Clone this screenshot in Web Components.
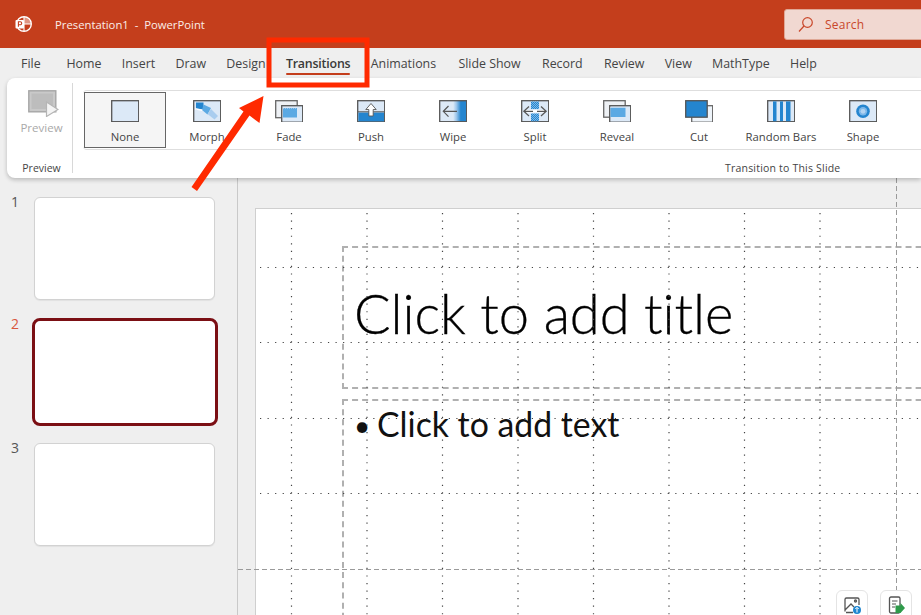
<!DOCTYPE html>
<html><head><meta charset="utf-8"><style>
html,body{margin:0;height:100%;overflow:hidden}
body{font-family:"Open Sans","Noto Sans",sans-serif;background:#efefef}
</style></head><body>
<ppt-app>
  <ppt-titlebar slot="title" doc="Presentation1  -  PowerPoint"></ppt-titlebar>
  <ppt-tabs slot="tabs">
    <ppt-tab>File</ppt-tab><ppt-tab>Home</ppt-tab><ppt-tab>Insert</ppt-tab><ppt-tab>Draw</ppt-tab><ppt-tab>Design</ppt-tab><ppt-tab active>Transitions</ppt-tab><ppt-tab style="margin-right:2px">Animations</ppt-tab><ppt-tab style="margin-right:1px">Slide Show</ppt-tab><ppt-tab style="margin-right:1px">Record</ppt-tab><ppt-tab>Review</ppt-tab><ppt-tab>View</ppt-tab><ppt-tab>MathType</ppt-tab><ppt-tab>Help</ppt-tab>
  </ppt-tabs>
  <ppt-ribbon slot="ribbon">
    <ppt-group slot="preview" label="Preview"><ppt-preview></ppt-preview></ppt-group>
    <ppt-gallery slot="gallery">
      <ppt-transition kind="none" selected>None</ppt-transition>
      <ppt-transition kind="morph">Morph</ppt-transition>
      <ppt-transition kind="fade">Fade</ppt-transition>
      <ppt-transition kind="push">Push</ppt-transition>
      <ppt-transition kind="wipe">Wipe</ppt-transition>
      <ppt-transition kind="split">Split</ppt-transition>
      <ppt-transition kind="reveal">Reveal</ppt-transition>
      <ppt-transition kind="cut">Cut</ppt-transition>
      <ppt-transition kind="bars">Random Bars</ppt-transition>
      <ppt-transition kind="shape">Shape</ppt-transition>
    </ppt-gallery>
  </ppt-ribbon>
  <ppt-thumbs slot="thumbs">
    <ppt-thumb n="1"></ppt-thumb>
    <ppt-thumb n="2" selected></ppt-thumb>
    <ppt-thumb n="3"></ppt-thumb>
  </ppt-thumbs>
  <ppt-stage slot="stage"></ppt-stage>
  <ppt-callout slot="callout"></ppt-callout>
</ppt-app>
<script>
const def=(name,html,extra)=>{
  customElements.define(name,class extends HTMLElement{
    constructor(){super();this.attachShadow({mode:'open'}).innerHTML=typeof html==='function'?html(this):html;}
    connectedCallback(){if(extra)extra(this);}
  });
};

def('ppt-app',`<style>
:host{display:grid;width:921px;height:615px;grid-template-columns:238px 683px;grid-template-rows:48px 30px 100px 437px;position:relative;overflow:hidden;background:#efefef}
.top{grid-column:1/3}
.left{border-right:1px solid #c9c9c9;min-height:0}
.main{min-width:0;min-height:0;overflow:hidden}
</style>
<div class="top"><slot name="title"></slot></div>
<div class="top"><slot name="tabs"></slot></div>
<div class="top"><slot name="ribbon"></slot></div>
<div class="left"><slot name="thumbs"></slot></div>
<div class="main"><slot name="stage"></slot></div>
<slot name="callout"></slot>`);

def('ppt-titlebar',`<style>
:host{display:flex;align-items:center;height:48px;background:#c43e1c;color:#fbeee9;font-size:11.300px;box-sizing:border-box;padding-left:14px}
svg.logo{width:18px;height:18px;flex:none;margin-right:23px}
.doc{white-space:pre;flex:1}
.search{flex:none;width:150px;height:31px;box-sizing:border-box;margin-right:-13px;background:#f1d8d1;border:1px solid #dfa795;border-radius:3px;display:flex;align-items:center;gap:11px;padding-left:12px;color:#c9472a;font-size:12px;letter-spacing:.02em}
.search svg{width:17px;height:17px}
</style>
<svg class="logo" viewBox="0 0 18 18"><circle cx="10" cy="9" r="7.300" fill="none" stroke="#fff" stroke-width="1.400"/><path d="M10 2v14M10 9h7" stroke="#fff" stroke-width="1.100"/><path d="M10 2.200a6.800 6.800 0 0 1 6.800 6.800H10z" fill="#fff" opacity=".45"/><rect x="1.500" y="5" width="8.500" height="8.500" rx="1" fill="#fff"/><path d="M4.400 11.800V6.800h1.800a1.500 1.500 0 0 1 0 3H4.400" fill="none" stroke="#c43e1c" stroke-width="1.100"/></svg>
<span class="doc"></span>
<div class="search"><svg viewBox="0 0 17 17" fill="none" stroke="#c9472a" stroke-width="1.200"><circle cx="10.500" cy="6.500" r="4.800"/><path d="M7 10 2 15.500"/></svg><span>Search</span></div>`,
el=>{el.shadowRoot.querySelector('.doc').textContent=el.getAttribute('doc');});

def('ppt-tabs',`<style>:host{display:flex;align-items:stretch;gap:20.300px;height:30px;background:#efefef;padding-left:21px}
::slotted(:first-child){margin-right:5.500px}</style><slot></slot>`);
def('ppt-tab',`<style>
:host{display:flex;flex:none;justify-content:center;align-items:center;height:30px;box-sizing:border-box;font-size:12.400px;color:#444;position:relative;padding-top:1px;white-space:nowrap}
:host([active]){font-weight:600;color:#3a3a3a;letter-spacing:-.2px}
:host([active])::after{content:"";position:absolute;left:0;right:0;bottom:3.500px;height:2px;background:#c43e1c;border-radius:1px}
</style><slot></slot>`);

def('ppt-ribbon',`<style>
:host{display:block;margin-left:7px;height:100px;background:#fff;border-radius:8px 0 0 8px;box-shadow:0 2px 4px rgba(0,0,0,.22);position:relative;z-index:2}
.row{display:flex;height:100%}
.pv{flex:none;width:66px;padding:5px 0 5px;box-sizing:border-box}
.tr{flex:1;min-width:0;display:grid;grid-template-rows:60px 1fr;padding:12px 0 0 10px;box-sizing:border-box;height:100%}
.gl{font-size:10.500px;color:#444;white-space:nowrap;padding:11px 0 0 642px;letter-spacing:.2px}
</style><div class="row"><div class="pv"><slot name="preview"></slot></div><div class="tr"><slot name="gallery"></slot><div class="gl">Transition to This Slide</div></div></div>`);

def('ppt-group',el=>`<style>
:host{display:flex;flex-direction:column;box-sizing:border-box;height:100%;border-right:1px solid #d8d8d8;padding-left:4px}
.b{flex:1}
.l{font-size:10.500px;color:#444;text-align:center;height:10px;line-height:10px}
</style><div class="b"><slot></slot></div><div class="l">${el.getAttribute('label')}</div>`);

def('ppt-preview',`<style>
:host{display:flex;flex-direction:column;align-items:center;padding-top:7px;color:#a9a9a9;font-size:11.500px}
svg{width:31px;height:27px;display:block;margin-left:3px}
</style><svg viewBox="0 0 31 27"><rect x=".8" y=".8" width="27" height="21" fill="#c9c9c9" stroke="#a6a6a6" stroke-width="1.400"/><rect x="3.500" y="3.500" width="21.500" height="15.500" fill="#bdbdbd"/><path d="M18.500 12 30 19.500l-11.500 7z" fill="#f4f4f4" stroke="#b5b5b5" stroke-width="1.200"/></svg><span style="margin-top:3px">Preview</span>`);

def('ppt-gallery',`<style>
:host{display:flex;align-items:stretch;height:60px;box-sizing:border-box;border-top:1.500px solid #dedede;border-bottom:1.500px solid #dedede;border-radius:4px 0 0 4px;padding-left:1px}
</style><slot></slot>`);

const frame='fill="#dce9f7" stroke="#555" stroke-width="1.300"';
const BL='#2485cf',MB='#5ba9e3',LB='#a9cdef';
const ICONS={
 none:`<rect x=".7" y=".7" width="27" height="21" ${frame}/>`,
 morph:`<rect x=".7" y=".7" width="27" height="21" ${frame}/><path d="M3 2.500h7.500v7H3z" fill="${BL}"/><path d="M10.500 4.500 18 8l-3.500 6.500L9 10z" fill="${MB}"/><path d="M18 9 25 16l-3.500 3.500L14.500 14z" fill="${LB}"/><path d="M2 9.500 9 11l.5-1.500-7-1.500z" fill="#fff"/>`,
 fade:`<rect x=".7" y=".7" width="21.500" height="17" fill="#eef1f5" stroke="#666" stroke-width="1.300"/><rect x="6.700" y="5.700" width="21" height="16.500" ${frame}/><rect x="8" y="8" width="14" height="9.500" fill="${MB}"/><path d="M8 8h14" stroke="#dce9f7" stroke-dasharray="1 1"/>`,
 push:`<rect x=".7" y=".7" width="27" height="21" fill="#dce9f7" stroke="#555" stroke-width="1.300"/><rect x="1.400" y="12.500" width="25.600" height="8.800" fill="${BL}"/><path d="M1 11.800h26" stroke="#555" stroke-width="1"/><path d="M14 3.500 8.800 9.500h3v6.500h4.400V9.500h3z" fill="#fff" stroke="#555" stroke-width=".9"/>`,
 wipe:`<defs><linearGradient id="w"><stop offset=".5" stop-color="#dce9f7"/><stop offset=".62" stop-color="#9cc6ec"/><stop offset=".78" stop-color="${BL}"/></linearGradient></defs><rect x=".7" y=".7" width="27" height="21" fill="url(#w)" stroke="#555" stroke-width="1.300"/><path d="M18 11.300H4.500M9.500 6l-5.200 5.300 5.200 5.300" fill="none" stroke="#555" stroke-width="1.200"/>`,
 split:`<defs><pattern id="st" width="2" height="2" patternUnits="userSpaceOnUse"><rect width="2" height="2" fill="#7fb9e8"/><rect width="1" height="1" fill="${BL}"/><rect x="1" y="1" width="1" height="1" fill="${BL}"/></pattern></defs><rect x=".7" y=".7" width="27" height="21" ${frame}/><path d="M10 1.400h8v7.600h-8zM10 13.500h8v7.700h-8z" fill="url(#st)"/><path d="M3 11.300h22" stroke="#fff" stroke-width="2.600"/><path d="M3 11.300h9M16 11.300h9M8 6.500 2.800 11.300 8 16M20 6.500l5.200 4.800L20 16" fill="none" stroke="#555" stroke-width="1.200"/>`,
 reveal:`<rect x=".7" y=".7" width="21.500" height="16.500" fill="#eef1f5" stroke="#666" stroke-width="1.300"/><rect x="6.700" y="5.700" width="21" height="16.500" ${frame}/><rect x="7.500" y="7.500" width="15" height="9.500" fill="${MB}"/><path d="M7.500 7.500h15" stroke="#dce9f7" stroke-dasharray="1 1"/>`,
 cut:`<rect x="6.700" y="5.700" width="21" height="16.500" fill="#eef4fa" stroke="#666" stroke-width="1.300"/><rect x=".7" y=".7" width="21.500" height="16.500" fill="${BL}" stroke="#555" stroke-width="1.300"/>`,
 bars:`<rect x=".7" y=".7" width="27" height="21" ${frame}/><rect x="6" y="1.400" width="3.500" height="19.800" fill="${BL}"/><rect x="13" y="1.400" width="3" height="19.800" fill="${BL}"/><rect x="19" y="1.400" width="4.500" height="19.800" fill="${BL}"/>`,
 shape:`<rect x=".7" y=".7" width="27" height="21" ${frame}/><circle cx="14" cy="11.300" r="6.800" fill="${BL}"/><circle cx="14" cy="11.300" r="4.200" fill="#7db8ea"/><circle cx="14" cy="11.300" r="2.400" fill="#b3d4f2"/>`
};
def('ppt-transition',el=>`<style>
:host{display:flex;flex:none;flex-direction:column;align-items:center;width:82px;box-sizing:border-box;padding-top:9px;font-size:11.300px;color:#444;white-space:nowrap}
:host([selected]){margin:1px 0;padding-top:8px;background:#f5f5f5;outline:1.300px solid #666;outline-offset:-1px;height:56px}
svg{width:28px;height:22px;display:block;margin-bottom:7px;flex:none}
</style><svg viewBox="0 0 28 22">${ICONS[el.getAttribute('kind')]}</svg><slot></slot>`);

def('ppt-thumbs',`<style>:host{display:flex;flex-direction:column;gap:17px;padding-top:19px}</style><slot></slot>`);
def('ppt-thumb',el=>{const n=el.getAttribute('n');return `<style>
:host{display:flex;height:105px;box-sizing:border-box;position:relative}
:host([selected]){height:107px}
.n{position:absolute;left:11px;top:-4px;font-size:14px;color:#555;line-height:18px}
:host([selected]) .n{color:#d9573d}
.s{margin-left:34px;width:181px;height:103px;background:#fff;border:1.500px solid #d2d2d2;border-radius:6px;box-sizing:border-box;box-shadow:0 1px 1px rgba(0,0,0,.06)}
:host([selected]) .s{margin:-1px 0 0 32px;width:186px;height:108px;border:3px solid #7b0f14;border-radius:8px;box-shadow:none}
</style><span class="n">${n}</span><div class="s"></div>`});

const vx=[291.500,367,442.500,518,593.500,669,744.500,820,895.500];
const hy=[267.500,342.500,418.500,493.500];
const lines=[...vx.filter(x=>x<890).map(x=>`<path d="M${x} 213V615" stroke="#444" stroke-width="1.200" stroke-dasharray="1.200 6.350"/>`),
 ...hy.map(y=>`<path d="M260 ${y}H921" stroke="#444" stroke-width="1.200" stroke-dasharray="1.200 6.350"/>`)].join('');
def('ppt-stage',`<style>
:host{display:block;height:437px;position:relative;background:#efefef;overflow:hidden}
.slide{margin:30px 0 0 17px;width:700px;height:420px;background:#fff;border:1px solid #cfcfcf;box-sizing:border-box;padding:37px 0 0 86px;display:flex;flex-direction:column;gap:10px}
.ph{width:640px;border:2px dashed #b0b0b0;box-sizing:border-box;flex:none}
.t{height:143px;display:flex;align-items:center;padding:0 0 9px 10px;font-family:Lato,"Open Sans",sans-serif;font-weight:300;font-size:54.300px;letter-spacing:-.1px;color:#000;white-space:nowrap;-webkit-text-stroke:.3px #000}
.b{height:230px;padding:3px 0 0 10px;font-family:Lato,"Open Sans",sans-serif;font-size:33.800px;color:#111;white-space:nowrap}
.b span{display:inline-block;width:23px;font-size:28px;vertical-align:1px}
svg.grid{position:absolute;left:-238px;top:-178px;width:921px;height:615px;pointer-events:none}
.btn{position:absolute;top:412px;width:32px;height:40px;background:#fff;border:1.500px solid #e4e4e4;border-radius:6px;box-sizing:border-box;display:flex;justify-content:center;padding-top:5px}
.btn svg{width:18px;height:18px}
</style>
<div class="slide"><div class="ph t">Click to add title</div><div class="ph b"><span>•</span>Click to add text</div></div>
<svg class="grid" viewBox="0 0 921 615">${lines}
<path d="M238 569.500H921" stroke="#9a9a9a" stroke-width="1" stroke-dasharray="5 3"/>
<path d="M896.500 178V590" stroke="#9a9a9a" stroke-width="1" stroke-dasharray="5 3"/>
</svg>
<div class="btn" style="left:598px"><svg viewBox="0 0 18 18" fill="none" stroke="#555" stroke-width="1.300"><path d="M2 15.500V3.500A1.500 1.500 0 0 1 3.500 2h11A1.500 1.500 0 0 1 16 3.500V9M2 14l6-6 3 3M3 16.500h7"/><circle cx="12.500" cy="5" r="1"/><circle cx="14" cy="14" r="4" fill="#1f86d0" stroke="none"/><path d="M14 16.500v-5M12.300 13l1.700-1.700 1.700 1.700" stroke="#fff" stroke-width="1"/></svg></div>
<div class="btn" style="left:642px"><svg viewBox="0 0 18 18" fill="none" stroke="#555" stroke-width="1.300"><rect x="2.500" y="1" width="10.500" height="16" rx="1.500"/><path d="M5 5h5.500M5 8h4M5 11h3" stroke-width="1"/><path d="M8.500 9.500h5V7l4.500 5-4.500 5h-5z" fill="#2e9a4a" stroke="none"/></svg></div>`);

def('ppt-callout',`<style>
:host{position:absolute;inset:0;z-index:5;pointer-events:none;display:block}
svg{position:absolute;left:0;top:0;width:921px;height:615px}
</style><svg viewBox="0 0 921 615"><rect x="269" y="40" width="98" height="45" fill="none" stroke="#ff2a00" stroke-width="5"/><path d="M263.500 96 259.500 123 249.500 115.500 197 191 191.500 187 243.500 111.500 239 108z" fill="#ff2a00"/></svg>`);
</script>
</body></html>
